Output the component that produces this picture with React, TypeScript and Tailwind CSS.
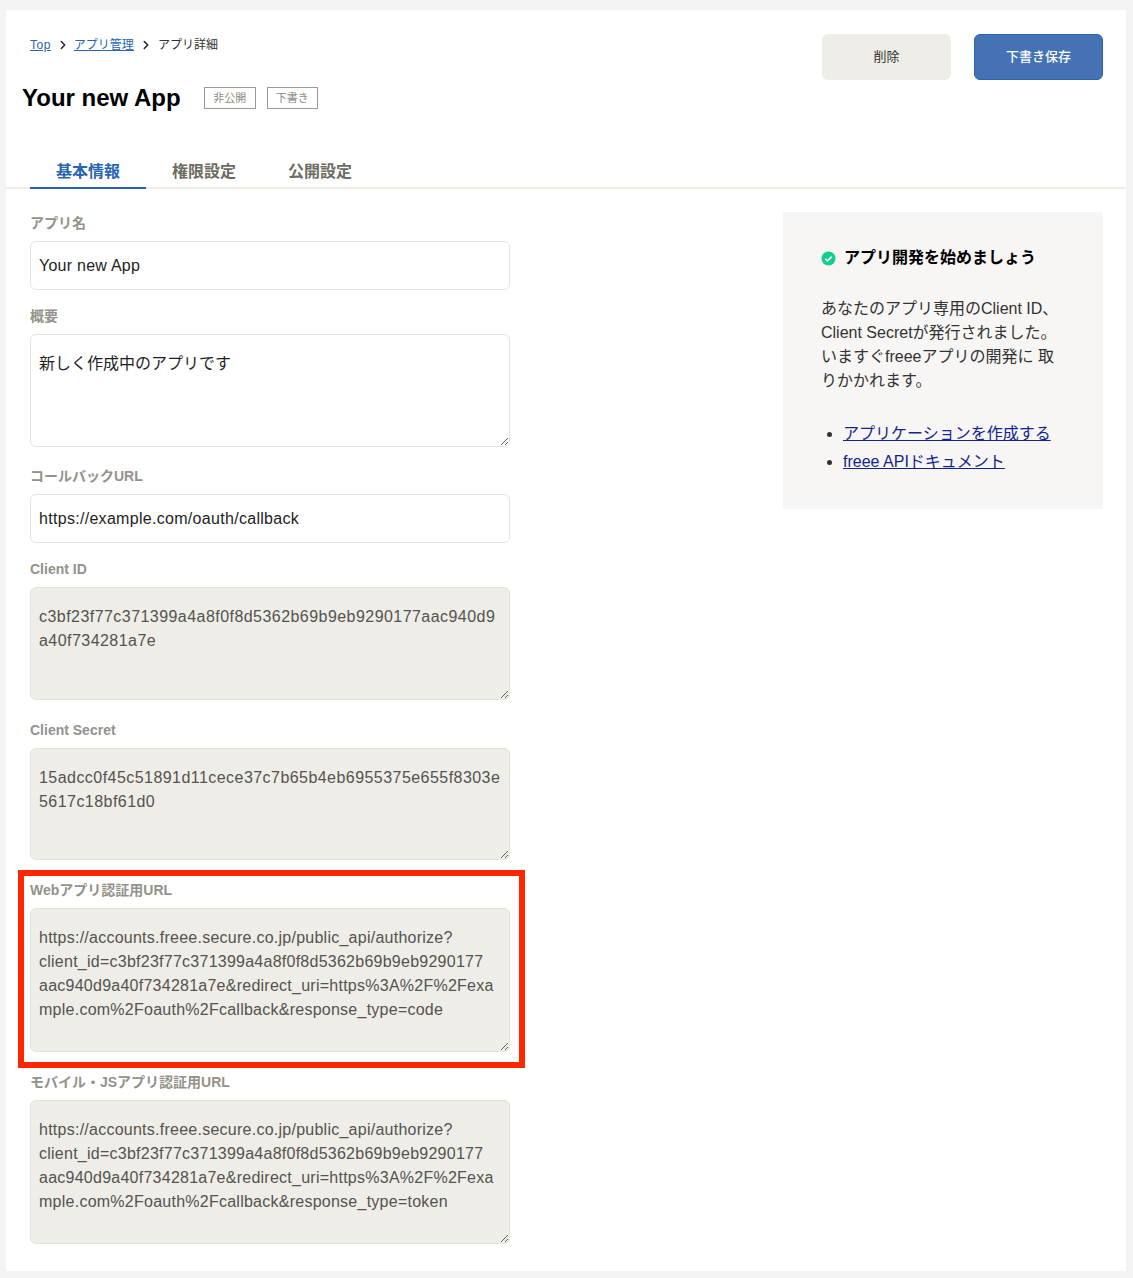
import { ChevronRight } from "lucide-react";

const font = "font-['Helvetica_Neue','Liberation_Sans','Noto_Sans_CJK_JP',sans-serif]";

function Label({ children }: { children: React.ReactNode }) {
  return <label className="block h-5 text-[14px] leading-5 font-bold text-[#94928a] mb-2">{children}</label>;
}

function Input({ value, track }: { value: string; track: string }) {
  return (
    <input
      readOnly
      value={value}
      className={`block w-[480px] h-[49px] px-2 mb-4 rounded-md border border-[#e4e2dc] bg-white text-[16px] text-[#1e1e1e] outline-none ${track}`}
    />
  );
}

function Area({ value, className }: { value: string; className: string }) {
  return (
    <textarea
      readOnly
      value={value}
      className={`block w-[480px] px-2 py-[17px] rounded-md border border-[#e4e2dc] text-[16px] leading-6 outline-none resize-y ${className}`}
    />
  );
}

// line breaks kept as in the page
const webUrl =
  "https://accounts.freee.secure.co.jp/public_api/authorize?\nclient_id=c3bf23f77c371399a4a8f0f8d5362b69b9eb9290177\naac940d9a40f734281a7e&redirect_uri=https%3A%2F%2Fexa\nmple.com%2Foauth%2Fcallback&response_type=";

const locked = "bg-[#eeede8] text-[#55534e]";

export default function App() {
  return (
    <div className={`${font} min-h-[1278px] bg-[#f4f4f4] pt-[10px] pl-[6px] pr-[7px] pb-[7px]`}>
      <div className="relative h-[1261px] bg-white">
        {/* header */}
        <div className="flex justify-between pl-6 pr-[23px] pt-6">
          <div>
            <nav className="flex items-center h-5 mt-px text-[12px] text-[#323232]">
              <a className="text-[#2864b0] underline font-medium tracking-[0.5px]">Top</a>
              <ChevronRight className="w-[14px] h-[14px] ml-[5px] mr-1 text-[#222]" strokeWidth={2.5} />
              <a className="text-[#2864b0] underline">アプリ管理</a>
              <ChevronRight className="w-[14px] h-[14px] mx-[5px] text-[#222]" strokeWidth={2.5} />
              <span>アプリ詳細</span>
            </nav>
            <div className="flex items-center mt-[25px] -ml-2">
              <h1 className="text-[24px] leading-9 font-bold text-black">Your new App</h1>
              <span className="ml-[23px] w-[52px] h-[22px] flex items-center justify-center border border-[#9a9890] text-[11px] text-[#8c8a82]">非公開</span>
              <span className="ml-[11px] w-[51px] h-[22px] flex items-center justify-center border border-[#9a9890] text-[11px] text-[#8c8a82]">下書き</span>
            </div>
          </div>
          <div className="flex gap-[23px]">
            <button className="w-[129px] h-[46px] rounded-md bg-[#eeede8] text-[13px] text-[#323232]">削除</button>
            <button className="w-[129px] h-[46px] rounded-md bg-[#4472b4] border border-[#2864b0] text-[13px] font-medium text-white">下書き保存</button>
          </div>
        </div>

        {/* tabs */}
        <div className="flex pl-6 mt-[34px] border-b-2 border-[#eeede8] h-[39px]">
          <div className="w-[116px] h-[39px] pt-2 text-center text-[16px] leading-7 font-bold text-[#2864b0] border-b-2 border-[#2864b0]">基本情報</div>
          <div className="w-[116px] pt-2 text-center text-[16px] leading-7 font-bold text-[#6e6b62]">権限設定</div>
          <div className="w-[116px] pt-2 text-center text-[16px] leading-7 font-bold text-[#6e6b62]">公開設定</div>
        </div>

        {/* body */}
        <div className="flex justify-between pl-6 pr-[23px] pt-[23px]">
          <div className="w-[480px] pt-px">
            <Label>アプリ名</Label>
            <Input value="Your new App" track="tracking-[0.25px]" />
            <Label>概要</Label>
            <Area value="新しく作成中のアプリです" className="h-[113px] mb-[19px] bg-white text-[#1e1e1e]" />
            <Label>コールバックURL</Label>
            <Input value="https://example.com/oauth/callback" track="tracking-[0.3px]" />
            <Label>Client ID</Label>
            <Area value="c3bf23f77c371399a4a8f0f8d5362b69b9eb9290177aac940d9a40f734281a7e" className={`h-[113px] mb-5 tracking-[0.45px] ${locked}`} />
            <Label>Client Secret</Label>
            <Area value="15adcc0f45c51891d11cece37c7b65b4eb6955375e655f8303e5617c18bf61d0" className={`h-[112px] mb-5 tracking-[0.45px] ${locked}`} />
            <Label>Webアプリ認証用URL</Label>
            <Area value={webUrl + "code"} className={`h-[144px] mb-5 tracking-[0.25px] ${locked}`} />
            <Label>モバイル・JSアプリ認証用URL</Label>
            <Area value={webUrl + "token"} className={`h-[144px] tracking-[0.25px] ${locked}`} />
          </div>

          <aside className="w-[320px] h-[297px] bg-[#f7f6f4] px-[38px] pt-[34px] text-[16px] leading-6 text-[#323232]">
            <h2 className="flex items-center font-bold text-black h-6">
              <svg viewBox="0 0 16 16" className="w-[15px] h-[15px] mr-2">
                <circle cx="8" cy="8" r="7.5" fill="#12ce8e" />
                <path d="M4.6 8.3l2.3 2.2 4.5-4.6" fill="none" stroke="#fff" strokeWidth="1.9" />
              </svg>
              アプリ開発を始めましょう
            </h2>
            <p className="mt-[27px]">
              あなたのアプリ専用のClient ID、Client Secretが発行されました。いますぐfreeeアプリの開発に 取りかかれます。
            </p>
            <ul className="mt-[29px] pl-[22px] list-disc space-y-1">
              <li><a className="text-[#14248f] underline">アプリケーションを作成する</a></li>
              <li><a className="text-[#14248f] underline">freee APIドキュメント</a></li>
            </ul>
          </aside>
        </div>

        {/* annotation */}
        <div className="absolute left-[12px] top-[860px] w-[507px] h-[198px] border-[6px] border-[#ff2600] pointer-events-none" />
      </div>
    </div>
  );
}
